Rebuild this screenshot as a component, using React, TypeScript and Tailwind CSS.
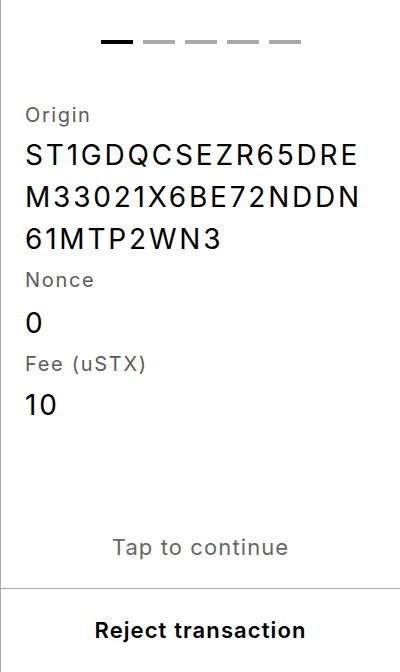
import React from 'react';

const steps = [true, false, false, false, false];

export default function App() {
  return (
    <div
      className="h-[672px] w-[400px] bg-white border-l border-[#aaaaaa] flex flex-col text-black"
      style={{ fontFamily: 'Inter, "Noto Sans", sans-serif' }}
    >
      {/* progress dashes */}
      <div className="flex justify-center gap-[10px] pt-[40px]">
        {steps.map((active, i) => (
          <div key={i} className={`h-[4px] w-[32px] ${active ? 'bg-black' : 'bg-[#aaaaaa]'}`} />
        ))}
      </div>

      <div className="flex-1 flex flex-col px-[24px] pt-[56px]">
        <div className="text-[20px] leading-[30px] tracking-[1.6px] text-[#5c5c5c]">Origin</div>
        <div className="mt-[4px] text-[28px] leading-[42px] tracking-[2.8px]">
          ST1GDQCSEZR65DRE
          <br />
          M33021X6BE72NDDN
          <br />
          61MTP2WN3
        </div>
        <div className="mt-[5px] text-[20px] leading-[30px] tracking-[1.7px] text-[#5c5c5c]">Nonce</div>
        <div className="mt-[7px] text-[28px] leading-[42px] tracking-[2.8px]">0</div>
        <div className="mt-[5px] text-[20px] leading-[30px] tracking-[1.7px] text-[#5c5c5c]">Fee (uSTX)</div>
        <div className="mt-[5px] text-[28px] leading-[42px] tracking-[2.8px]">10</div>

        <div className="mt-auto pb-[26px] text-center text-[22px] leading-[30px] tracking-[1.1px] text-[#666666]">
          Tap to continue
        </div>
      </div>

      <div className="h-[84px] border-t border-[#aaaaaa] flex items-center justify-center">
        <span className="text-[22px] font-semibold tracking-[1.1px]">Reject transaction</span>
      </div>
    </div>
  );
}
